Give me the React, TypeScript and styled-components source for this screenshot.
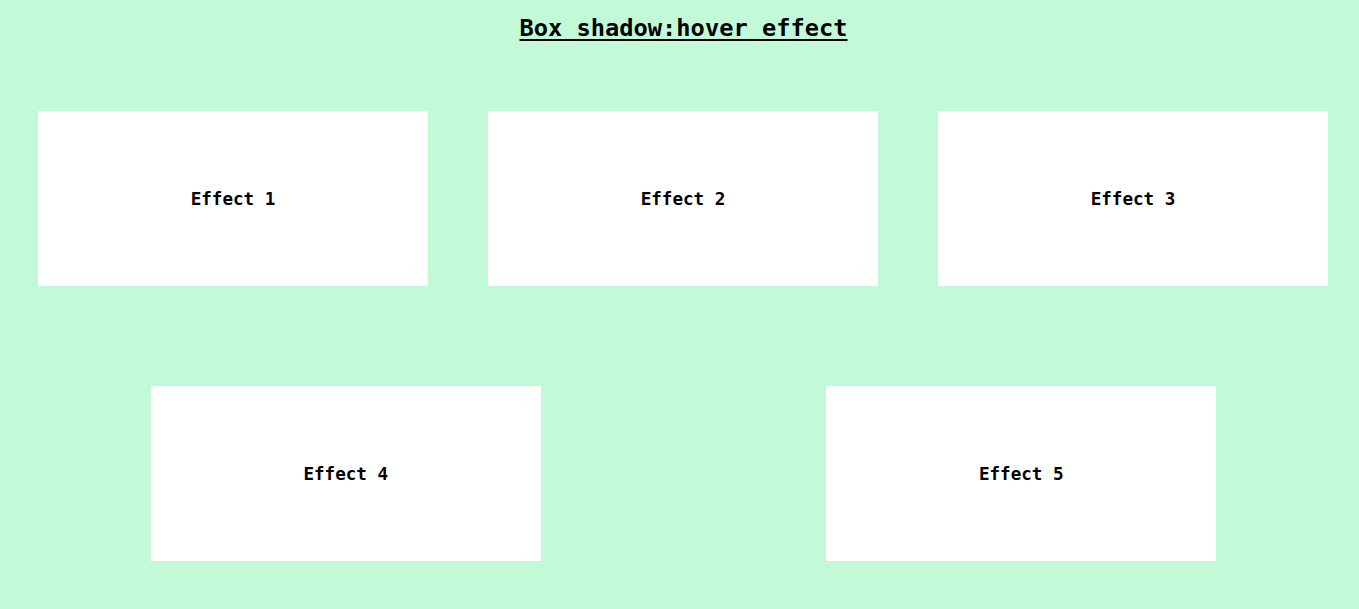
import styled, { createGlobalStyle } from "styled-components";

const GlobalStyle = createGlobalStyle`
  html, body {
    margin: 0;
    padding: 0;
    background-color: #c2fad8;
  }
`;

const Page = styled.div`
  min-height: 609px;
  padding-left: 8px;
  background-color: #c2fad8;
  font-family: "DejaVu Sans Mono", "Liberation Mono", monospace;
  color: #000;
`;

const Title = styled.h1`
  margin: 0;
  padding-top: 13px;
  text-align: center;
  font-size: 23.7px;
  line-height: 30px;
  font-weight: bold;
  text-decoration: underline;
  text-underline-offset: 3px;
`;

const Rows = styled.div`
  display: flex;
  flex-direction: column;
  gap: 100px;
  padding-top: 68px;
`;

const Row = styled.div<{ $spread?: boolean }>`
  display: flex;
  justify-content: ${(p) => (p.$spread ? "space-around" : "flex-start")};
  padding-left: ${(p) => (p.$spread ? "0" : "30px")};
  gap: ${(p) => (p.$spread ? "0" : "60px")};
`;

const Card = styled.div`
  width: 390px;
  height: 175px;
  flex-shrink: 0;
  display: flex;
  align-items: center;
  justify-content: center;
  background: #fff;
  font-size: 17.6px;
  font-weight: bold;
  cursor: pointer;
  transition: box-shadow 0.3s ease;

  &:hover {
    box-shadow: 0 10px 30px rgba(0, 0, 0, 0.25);
  }
`;

export default function App() {
  return (
    <Page>
      <GlobalStyle />
      <Title>Box shadow:hover effect</Title>
      <Rows>
        <Row>
          <Card>Effect 1</Card>
          <Card>Effect 2</Card>
          <Card>Effect 3</Card>
        </Row>
        <Row $spread>
          <Card>Effect 4</Card>
          <Card>Effect 5</Card>
        </Row>
      </Rows>
    </Page>
  );
}
